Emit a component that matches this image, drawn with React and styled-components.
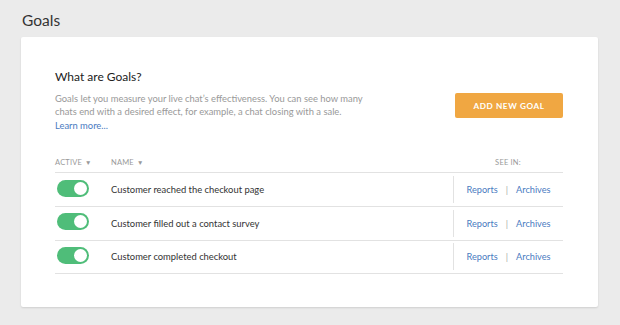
import React, { useState } from 'react';
import styled, { createGlobalStyle } from 'styled-components';

const GlobalStyle = createGlobalStyle`
  html, body {
    margin: 0;
    padding: 0;
    background: #ebebeb;
    font-family: Lato, 'Open Sans', sans-serif;
  }
`;

const Page = styled.div`
  padding: 9px 22px 18px 21px;
`;

const PageTitle = styled.h1`
  margin: 0 0 5px 1px;
  font-size: 15.5px;
  line-height: 23px;
  font-weight: 400;
  color: #333;
`;

const Card = styled.div`
  background: #fff;
  border-radius: 2px;
  box-shadow: 0 1px 2px rgba(0, 0, 0, 0.12);
  padding: 31px 35px 33px 34px;
`;

const Intro = styled.div`
  display: flex;
  justify-content: space-between;
  align-items: flex-start;
`;

const IntroText = styled.div`
  width: 330px;
`;

const Heading = styled.h2`
  margin: 0 0 6px;
  font-size: 12px;
  line-height: 18px;
  font-weight: 400;
  color: #222;
`;

const Description = styled.p`
  margin: 0;
  font-size: 9.4px;
  line-height: 13.4px;
  color: #999;
`;

const Link = styled.a`
  color: #4a7bbf;
  text-decoration: none;
  cursor: pointer;
`;

const AddButton = styled.button`
  margin-top: 25px;
  width: 108px;
  height: 25px;
  border: none;
  border-radius: 2px;
  background: #f0a742;
  color: #fff;
  font-family: inherit;
  font-size: 8.2px;
  font-weight: 700;
  letter-spacing: 0.6px;
  cursor: pointer;
`;

const Table = styled.div`
  margin-top: 21px;
`;

const Row = styled.div`
  display: grid;
  grid-template-columns: 56px 1fr 110px;
  align-items: center;
  height: ${(p) => (p.$head ? '19px' : '32.7px')};
  border-bottom: 1px solid #e2e2e2;
`;

const HeadCell = styled.div`
  font-size: 7.5px;
  color: #999;
  text-transform: uppercase;
  letter-spacing: 0.2px;
  text-align: ${(p) => (p.$center ? 'center' : 'left')};
`;

const Arrow = styled.span`
  font-size: 6.5px;
  margin-left: 3px;
`;

const Name = styled.div`
  font-size: 9.4px;
  color: #333;
`;

const SeeIn = styled.div`
  height: 27px;
  border-left: 1px solid #e2e2e2;
  display: flex;
  align-items: center;
  justify-content: center;
  gap: 8px;
  font-size: 9.2px;
`;

const Pipe = styled.span`
  color: #aaa;
`;

const Toggle = styled.button`
  position: relative;
  margin-left: 2px;
  width: 32px;
  height: 17px;
  padding: 0;
  border: none;
  border-radius: 9px;
  background: ${(p) => (p.$on ? '#4fbd79' : '#ccc')};
  cursor: pointer;

  &::after {
    content: '';
    position: absolute;
    top: 2px;
    left: ${(p) => (p.$on ? '17px' : '2px')};
    width: 13px;
    height: 13px;
    border-radius: 50%;
    background: #fff;
  }
`;

const goals = [
  'Customer reached the checkout page',
  'Customer filled out a contact survey',
  'Customer completed checkout',
];

function App() {
  const [active, setActive] = useState(goals.map(() => true));

  const handleToggle = (index) => {
    setActive(active.map((v, i) => (i === index ? !v : v)));
  };

  return (
    <Page>
      <GlobalStyle />
      <PageTitle>Goals</PageTitle>
      <Card>
        <Intro>
          <IntroText>
            <Heading>What are Goals?</Heading>
            <Description>
              Goals let you measure your live chat’s effectiveness. You can see how many
              <br />
              chats end with a desired effect, for example, a chat closing with a sale.
              <br />
              <Link>Learn more...</Link>
            </Description>
          </IntroText>
          <AddButton>ADD NEW GOAL</AddButton>
        </Intro>

        <Table>
          <Row $head>
            <HeadCell>
              Active<Arrow>▼</Arrow>
            </HeadCell>
            <HeadCell>
              Name<Arrow>▼</Arrow>
            </HeadCell>
            <HeadCell $center>See in:</HeadCell>
          </Row>
          {goals.map((goal, index) => (
            <Row key={index}>
              <div>
                <Toggle $on={active[index]} onClick={() => handleToggle(index)} />
              </div>
              <Name>{goal}</Name>
              <SeeIn>
                <Link>Reports</Link>
                <Pipe>|</Pipe>
                <Link>Archives</Link>
              </SeeIn>
            </Row>
          ))}
        </Table>
      </Card>
    </Page>
  );
}

export default App;
